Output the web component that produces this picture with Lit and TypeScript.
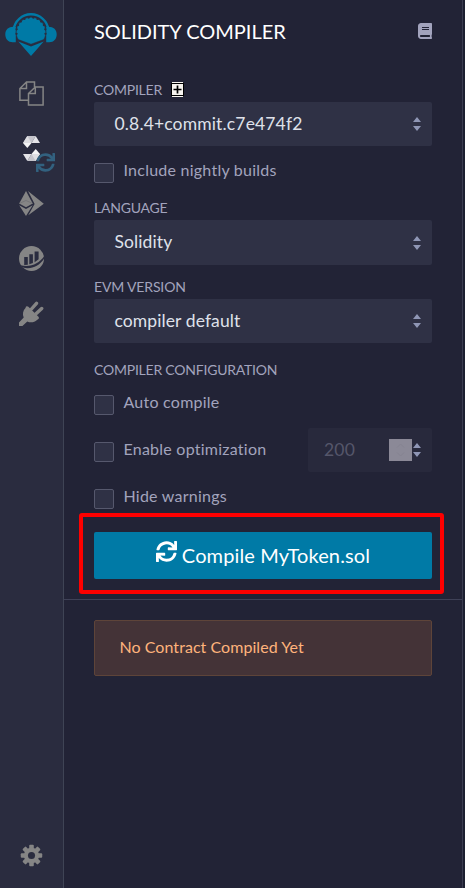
import { LitElement, html, svg, css } from "lit";
import { customElement, property } from "lit/decorators.js";

const syncPath =
  "M440.65 12.57l4 82.77A247.16 247.16 0 0 0 255.83 8C134.73 8 33.91 94.92 12.29 209.82A12 12 0 0 0 24.09 224h49.05a12 12 0 0 0 11.67-9.26 175.91 175.91 0 0 1 317-56.94l-101.46-4.86a12 12 0 0 0-12.57 12v47.41a12 12 0 0 0 12 12H500a12 12 0 0 0 12-12V12a12 12 0 0 0-12-12h-47.37a12 12 0 0 0-11.98 12.57zM255.83 432a175.61 175.61 0 0 1-146-77.8l101.8 4.87a12 12 0 0 0 12.57-12v-47.4a12 12 0 0 0-12-12H12a12 12 0 0 0-12 12V500a12 12 0 0 0 12 12h47.35a12 12 0 0 0 12-12.6l-4.15-82.57A247.17 247.17 0 0 0 255.83 504c121.11 0 221.93-86.92 243.55-201.82a12 12 0 0 0-11.8-14.18h-49.05a12 12 0 0 0-11.67 9.26A175.86 175.86 0 0 1 255.83 432z";
const bookPath =
  "M448 360V24c0-13.3-10.7-24-24-24H96C43 0 0 43 0 96v320c0 53 43 96 96 96h328c13.3 0 24-10.7 24-24v-16c0-7.5-3.5-14.3-8.9-18.7-4.2-15.4-4.2-59.3 0-74.7 5.4-4.3 8.9-11.1 8.9-18.6zM128 134c0-3.3 2.7-6 6-6h212c3.3 0 6 2.7 6 6v20c0 3.3-2.7 6-6 6H134c-3.3 0-6-2.7-6-6v-20zm0 64c0-3.3 2.7-6 6-6h212c3.3 0 6 2.7 6 6v20c0 3.3-2.7 6-6 6H134c-3.3 0-6-2.7-6-6v-20zm253.4 250H96c-17.7 0-32-14.3-32-32 0-17.6 14.4-32 32-32h285.4c-1.9 17.1-1.9 46.9 0 64z";

// Notches along the scalloped top edge of the logo's shell.
const notches = Array.from({ length: 12 }, (_, i) => {
  const a = Math.PI * (1.04 - (i * 1.08) / 11);
  return { x: 26 + 14.6 * Math.cos(a), y: 21 - 14.6 * Math.sin(a) };
});

@customElement("side-rail")
class SideRail extends LitElement {
  static styles = css`
    :host {
      display: flex;
      flex-direction: column;
      align-items: center;
      box-sizing: border-box;
      width: 64px;
      height: 100%;
      padding: 11px 1px 21px 0;
      background: #2a2c3f;
      border-right: 1px solid #3f4455;
      color: #858585;
    }
    svg {
      display: block;
    }
    .logo {
      flex: none;
      color: #007aa6;
      margin-bottom: 22px;
    }
    .item {
      position: relative;
      height: 29px;
      margin-bottom: 26px;
      display: grid;
      place-items: center;
    }
    .badge {
      position: absolute;
      left: 13px;
      top: 19px;
      color: #32617f;
    }
    .gear {
      margin-top: auto;
    }
  `;
  render() {
    return html`
      <svg class="logo" width="52" height="46" viewBox="0 0 52 46">
        <path d="M8.500 19A17.600 17.600 0 0 1 43.500 19" fill="none" stroke="currentColor" stroke-width="2.300" />
        <path d="M10.800 15.800C4 15 .3 18 .3 23.300c0 4.900 3 8.100 7.600 8h2.900z" fill="currentColor" />
        <path d="M41.200 15.800C48 15 51.700 18 51.700 23.300c0 4.900-3 8.100-7.600 8h-2.900z" fill="currentColor" />
        <path
          d="M13.300 28.600C11.700 26 11.200 23.500 11.200 21A14.800 14.800 0 0 1 40.800 21C40.800 23.500 40.300 26 38.700 28.600L26 33.200z"
          fill="currentColor"
          stroke="#2a2c3f"
          stroke-width=".5"
        />
        ${notches.map((t) => svg`<circle cx=${t.x} cy=${t.y} r="1.15" fill="#2a2c3f" />`)}
        <path d="M13.300 30.500L26 35.600 38.700 30.500 26 45z" fill="currentColor" />
      </svg>
      <div class="item">
        <svg width="25" height="25" viewBox="0 0 25 25" fill="none" stroke="currentColor" stroke-width="1.500">
          <path d="M9.500 19.300H.9V7.500L7.500.9h8v5M7.500.9v6.600H.9" />
          <path d="M9.500 12.500L16.300 5.900h7.800v18.200H9.500zM16.300 5.900v6.600H9.500" />
        </svg>
      </div>
      <div class="item">
        <svg width="17" height="25" viewBox="0 0 17 25">
          <path d="M4.300 0h8.400L8.500 7H0z" fill="#c4c4cb" />
          <path d="M4.300 0L8.500 7H0z" fill="#dedee2" />
          <path d="M12.700 0L17 7H8.500z" fill="#e4e4e8" />
          <path d="M0 7h8.500l-4.200 5z" fill="#f4f4f5" />
          <path d="M12.700 25H4.300L8.500 18H17z" fill="#c4c4cb" />
          <path d="M12.700 25L8.500 18H17z" fill="#dedee2" />
          <path d="M4.300 25L0 18h8.500z" fill="#e4e4e8" />
          <path d="M17 18H8.500l4.200-5z" fill="#f4f4f5" />
        </svg>
        <svg class="badge" width="19" height="19" viewBox="0 0 512 512"><path fill="currentColor" d=${syncPath} /></svg>
      </div>
      <div class="item">
        <svg width="25" height="25" viewBox="0 0 25 25" fill="currentColor">
          <path d="M7 0l6.700 12.500L7 16.200.2 12.500z" />
          <path d="M.2 14.200L7 18l6.700-3.800L7 25z" />
          <path d="M9 0l15.800 12.800L9.300 24.300l6.300-11.200z" />
          <path d="M7 9.500L.2 12.500M7 9.500l6.700 3" stroke="#6e6e72" stroke-width=".7" fill="none" />
        </svg>
      </div>
      <div class="item">
        <svg width="25" height="25" viewBox="0 0 25 25">
          <circle cx="12.500" cy="12.500" r="12.500" fill="currentColor" />
          <path d="M5.200 19v-8h3.600v7.800zM10.300 18.300V8.300h3.600v8.700zM15.600 16.200V5.500h4v7.800z" fill="#2a2c3f" />
          <path d="M1.500 19.300C12 21.500 20 17.500 25 10.500v2.300C20 20.500 12 23.700 3.600 21.500z" fill="#2a2c3f" />
        </svg>
      </div>
      <div class="item">
        <svg width="25" height="25" viewBox="0 0 25 25">
          <path d="M2 23l6-6M12.500 8l5-5.700M17 12.800l5.700-5.300" stroke="currentColor" stroke-width="3.400" stroke-linecap="round" />
          <path
            d="M7 5.600Q8.200 4.600 9.400 5.800L19.500 15.800Q20.600 17.200 19.400 18L18 18.900C15.500 21.400 11.500 22 8.300 20.400L3.400 25H0V21.500L4.700 16.500C3.200 13.300 4 9.500 6.500 7z"
            fill="currentColor"
          />
        </svg>
      </div>
      <svg class="gear" width="23" height="23" viewBox="-12 -12 24 24" fill="currentColor">
        ${[0, 45, 90, 135].map(
          (a) => svg`<rect x="-2.400" y="-11.200" width="4.800" height="22.400" rx="1" transform="rotate(${a})" />`,
        )}
        <circle r="8" />
        <circle r="3.700" fill="#2a2c3f" />
      </svg>
    `;
  }
}

@customElement("updown-caret")
class UpdownCaret extends LitElement {
  static styles = css`
    :host {
      display: block;
      width: 8px;
      height: 14px;
    }
    svg {
      display: block;
    }
  `;
  render() {
    return html`<svg width="8" height="14" viewBox="0 0 8 14" fill="#8f96b5">
      <path d="M4 0L8 5H0zM4 14L0 9h8z" />
    </svg>`;
  }
}

@customElement("select-box")
class SelectBox extends LitElement {
  @property() value = "";
  static styles = css`
    :host {
      display: flex;
      box-sizing: border-box;
      align-items: center;
      justify-content: space-between;
      height: 44px;
      padding: 0 11px 0 20.500px;
      border-radius: 2px;
      background: #2f3145;
      color: #dfe1ea;
      font-size: 17.500px;
      letter-spacing: 0.1px;
    }
    :host(.tall) {
      height: 45px;
    }
    :host(.version) {
      letter-spacing: 0.15px;
    }
    span {
      padding-bottom: 2px;
    }
  `;
  render() {
    return html`<span>${this.value}</span><updown-caret></updown-caret>`;
  }
}

@customElement("check-row")
class CheckRow extends LitElement {
  @property() label = "";
  static styles = css`
    :host {
      display: flex;
      gap: 9.500px;
      height: 20px;
      color: #a2a3bd;
      font-size: 16px;
      line-height: 14px;
      letter-spacing: 0.24px;
    }
    .box {
      box-sizing: border-box;
      width: 20px;
      height: 20px;
      border: 1px solid #56586d;
      border-radius: 2px;
      background: #2f3145;
    }
  `;
  render() {
    return html`<span class="box"></span><span>${this.label}</span>`;
  }
}

@customElement("app-root")
class AppRoot extends LitElement {
  static styles = css`
    :host {
      display: flex;
      height: 888px;
      overflow: hidden;
      background: #1c1f30;
      font-family: Lato, "Open Sans", sans-serif;
    }
    side-rail {
      flex: none;
    }
    .panel {
      box-sizing: border-box;
      width: 399px;
      background: #222336;
      border-right: 1px solid #3a3c50;
    }
    .form {
      box-sizing: border-box;
      height: 599px;
      padding: 12px 30px 0;
    }
    .head {
      display: flex;
      align-items: center;
      justify-content: space-between;
      height: 40px;
      margin-bottom: 28px;
      color: #fff;
      font-size: 20px;
    }
    .title {
      padding-bottom: 2px;
    }
    .book {
      color: #a2a3bd;
      margin-top: -2px;
    }
    .label {
      display: flex;
      align-items: center;
      box-sizing: border-box;
      gap: 9.500px;
      height: 20px;
      padding-bottom: 2px;
      margin-bottom: 2px;
      color: #a2a3bd;
      font-size: 14px;
      letter-spacing: -0.220px;
    }
    .plus {
      margin-top: 1px;
    }
    .nightly {
      margin: 17px 0 15px;
    }
    .language {
      margin-bottom: 2px;
    }
    .evm {
      margin-top: 12px;
      letter-spacing: -0.150px;
    }
    .config {
      margin: 17px 0 15px;
    }
    .optimize {
      display: flex;
      justify-content: space-between;
      align-items: center;
      height: 44px;
      margin: 13px 0 17px;
    }
    .optimize check-row {
      margin-top: 4px;
    }
    .runs {
      display: flex;
      align-items: center;
      box-sizing: border-box;
      width: 124px;
      height: 44px;
      padding: 0 11px 0 16px;
      border-radius: 2px;
      background: #28293c;
      color: #55566a;
      font-size: 17.500px;
      letter-spacing: 0.2px;
    }
    .count {
      padding-bottom: 2px;
    }
    .spin {
      display: grid;
      place-items: center;
      width: 23px;
      height: 22px;
      margin: 0 1px 0 auto;
      background: #8b8997;
    }
    .compile {
      position: relative;
      display: flex;
      align-items: center;
      justify-content: center;
      height: 47px;
      margin-top: 23px;
      border-radius: 2px;
      background: #007aa6;
      color: #fff;
      font-size: 20px;
      letter-spacing: 0.130px;
    }
    .compile span {
      padding-bottom: 2px;
    }
    .compile svg {
      margin: -9px 5px 0 0;
    }
    .highlight {
      position: absolute;
      inset: -19px -12px -15px -15px;
      border: 4px solid #fe0000;
      border-radius: 3px;
    }
    .result {
      border-top: 1px solid #3f4157;
      padding: 20px 30px 0;
    }
    .alert {
      display: flex;
      align-items: center;
      box-sizing: border-box;
      height: 56px;
      padding: 0 0 3px 24.500px;
      border: 1px solid #5e4439;
      border-radius: 2px;
      background: #443337;
      color: #ffb37c;
      font-size: 16px;
      letter-spacing: 0.050px;
    }
  `;
  render() {
    return html`
      <side-rail></side-rail>
      <div class="panel">
        <div class="form">
          <div class="head">
            <span class="title">SOLIDITY COMPILER</span>
            <svg class="book" width="14" height="16" viewBox="0 0 448 512"><path fill="currentColor" d=${bookPath} /></svg>
          </div>
          <div class="label">
            <span>COMPILER</span>
            <svg class="plus" width="13" height="15" viewBox="0 0 13 15">
              <rect x="1" width="11" height="15" fill="#f6f3ef" />
              <rect y="1" width="13" height="13" fill="#000" />
              <rect x="1" y="2" width="11" height="11" fill="#f6f3ef" />
              <path d="M6.500 3.500v8M2.500 7.500h8" stroke="#000" stroke-width="1.700" />
            </svg>
          </div>
          <select-box class="version" value="0.8.4+commit.c7e474f2"></select-box>
          <check-row class="nightly" label="Include nightly builds"></check-row>
          <div class="label language">LANGUAGE</div>
          <select-box class="tall" value="Solidity"></select-box>
          <div class="label evm">EVM VERSION</div>
          <select-box value="compiler default"></select-box>
          <div class="label config">COMPILER CONFIGURATION</div>
          <check-row label="Auto compile"></check-row>
          <div class="optimize">
            <check-row label="Enable optimization"></check-row>
            <div class="runs">
              <span class="count">200</span>
              <span class="spin">
                <svg width="9" height="14" viewBox="0 0 9 14" fill="none" stroke="#858391">
                  <path d="M1 4.500L4.500 1 8 4.500M1 9.500L4.500 13 8 9.500" />
                </svg>
              </span>
              <updown-caret></updown-caret>
            </div>
          </div>
          <check-row label="Hide warnings"></check-row>
          <div class="compile">
            <svg width="21" height="21" viewBox="0 0 512 512"><path fill="currentColor" d=${syncPath} /></svg>
            <span>Compile MyToken.sol</span>
            <div class="highlight"></div>
          </div>
        </div>
        <div class="result">
          <div class="alert">No Contract Compiled Yet</div>
        </div>
      </div>
    `;
  }
}
